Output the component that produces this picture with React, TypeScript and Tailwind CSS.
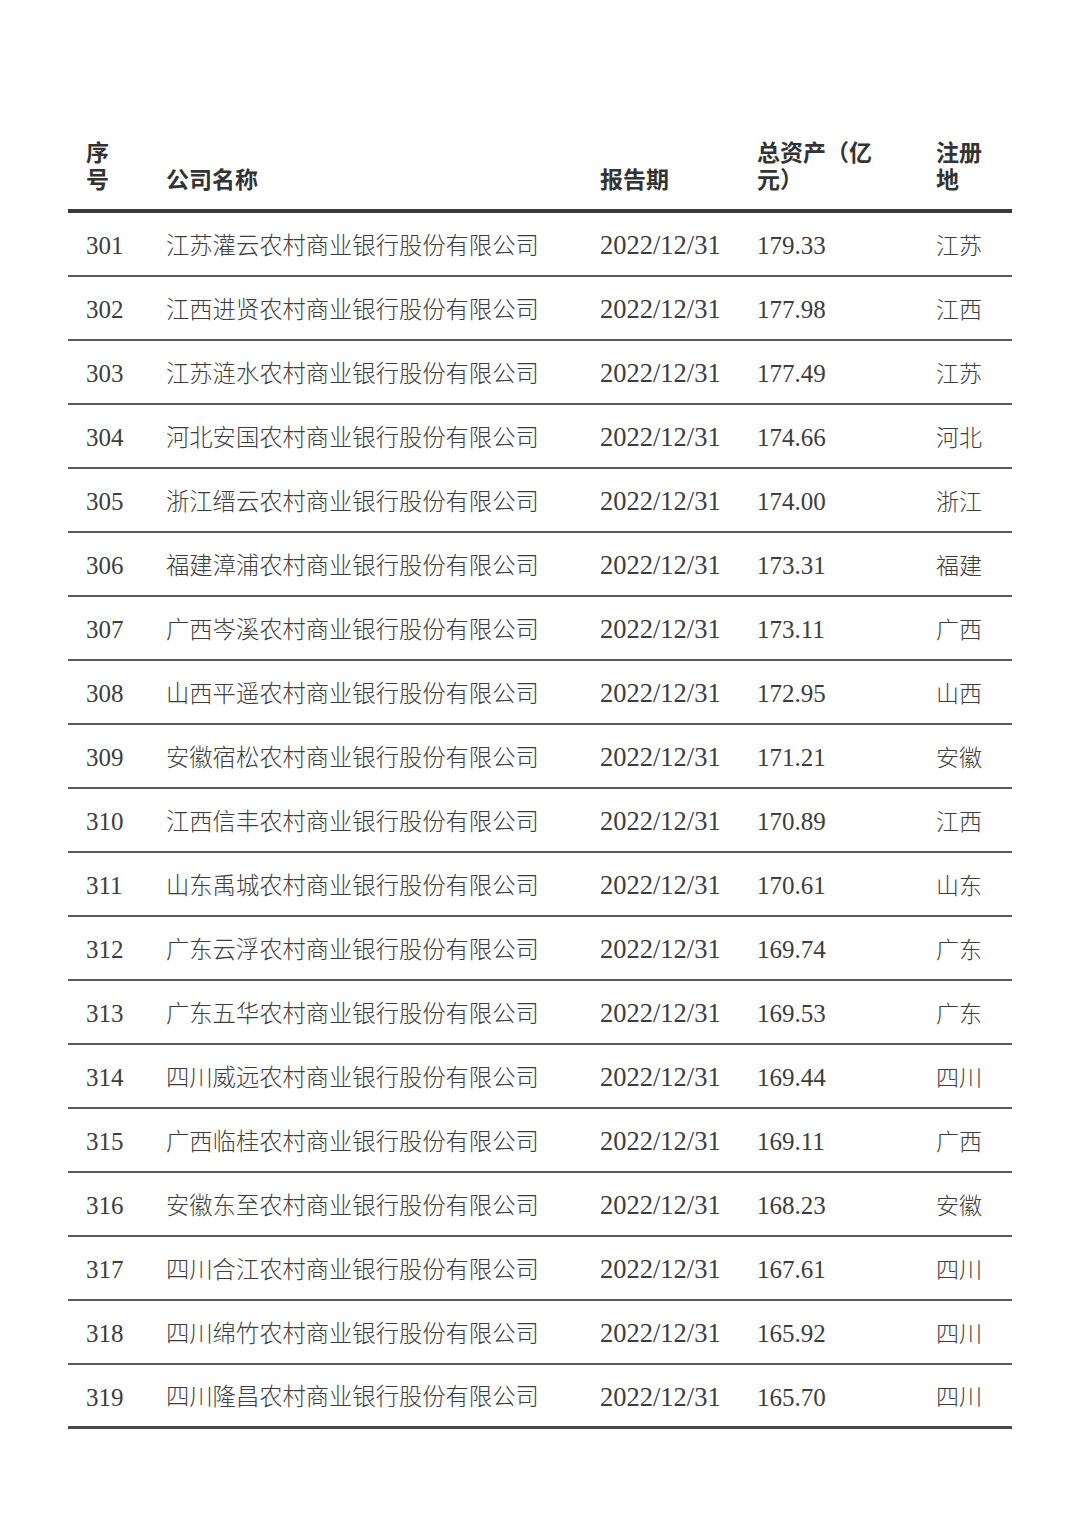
import React from "react";

const rows: [string, string, string, string][] = [
  ["301", "江苏灌云农村商业银行股份有限公司", "179.33", "江苏"],
  ["302", "江西进贤农村商业银行股份有限公司", "177.98", "江西"],
  ["303", "江苏涟水农村商业银行股份有限公司", "177.49", "江苏"],
  ["304", "河北安国农村商业银行股份有限公司", "174.66", "河北"],
  ["305", "浙江缙云农村商业银行股份有限公司", "174.00", "浙江"],
  ["306", "福建漳浦农村商业银行股份有限公司", "173.31", "福建"],
  ["307", "广西岑溪农村商业银行股份有限公司", "173.11", "广西"],
  ["308", "山西平遥农村商业银行股份有限公司", "172.95", "山西"],
  ["309", "安徽宿松农村商业银行股份有限公司", "171.21", "安徽"],
  ["310", "江西信丰农村商业银行股份有限公司", "170.89", "江西"],
  ["311", "山东禹城农村商业银行股份有限公司", "170.61", "山东"],
  ["312", "广东云浮农村商业银行股份有限公司", "169.74", "广东"],
  ["313", "广东五华农村商业银行股份有限公司", "169.53", "广东"],
  ["314", "四川威远农村商业银行股份有限公司", "169.44", "四川"],
  ["315", "广西临桂农村商业银行股份有限公司", "169.11", "广西"],
  ["316", "安徽东至农村商业银行股份有限公司", "168.23", "安徽"],
  ["317", "四川合江农村商业银行股份有限公司", "167.61", "四川"],
  ["318", "四川绵竹农村商业银行股份有限公司", "165.92", "四川"],
  ["319", "四川隆昌农村商业银行股份有限公司", "165.70", "四川"],
];

const cjk = "font-['Noto_Sans_CJK_SC',sans-serif]";
const num = "font-['Liberation_Serif','Noto_Sans_CJK_SC',serif] [font-variant-numeric:oldstyle-nums] pt-[4px]";

export default function App() {
  return (
    <div className="w-[1080px] h-[1528px] bg-white pt-[138px] pl-[68px]">
      <div className="w-[944px]">
        <div className="grid grid-cols-[98px_434px_157px_179px_76px] items-end border-b-[4px] border-[#3a3a3a] pb-[17px] text-[23px] leading-[27px] font-bold text-[#333] font-['Noto_Sans_CJK_SC',sans-serif]">
          <div className="pl-[18px]">序<br />号</div>
          <div>公司名称</div>
          <div>报告期</div>
          <div>总资产（亿<br />元）</div>
          <div>注册<br />地</div>
        </div>
        {rows.map((r, i) => (
          <div
            key={r[0]}
            className={`grid grid-cols-[98px_434px_157px_179px_76px] items-center h-[64px] text-[#3d3d3d] ${i === rows.length - 1 ? "border-b-[3px] border-[#4a4a4a]" : "border-b-2 border-[#5a5a5a]"}`}
          >
            <div className={`pl-[18px] text-[25px] ${num}`}>{r[0]}</div>
            <div className={`text-[23.3px] font-light ${cjk}`}>{r[1]}</div>
            <div className={`text-[26.5px] ${num}`}>2022/12/31</div>
            <div className={`text-[25px] ${num}`}>{r[2]}</div>
            <div className={`text-[23px] font-light ${cjk}`}>{r[3]}</div>
          </div>
        ))}
      </div>
    </div>
  );
}
